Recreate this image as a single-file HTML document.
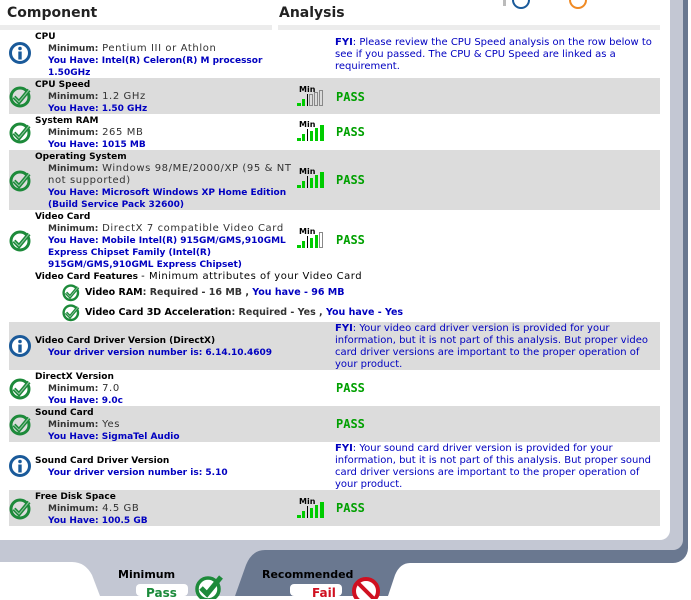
<!DOCTYPE html>
<html><head><meta charset="utf-8"><style>
*{margin:0;padding:0;box-sizing:border-box}
body{width:691px;height:596px;overflow:hidden;background:#fff;font-family:"DejaVu Sans","Liberation Sans",sans-serif;font-size:10px;line-height:12px;color:#333;position:relative}
.a{position:absolute}
.row{position:absolute;left:9px;width:651px}
.g{background:#dcdcdc}
.t{position:absolute;left:26px;color:#000;font-weight:bold;white-space:nowrap;font-size:9px}
.t span{font-size:10px;letter-spacing:.5px}
.m{position:absolute;left:39px;white-space:nowrap;letter-spacing:.6px}
.m b{color:#333;font-size:9px;letter-spacing:0}
.y{color:#0000c0;font-weight:bold;font-size:9px;letter-spacing:0}
.fyi{position:absolute;left:326px;width:325px;color:#0000c0}
.fyi b{font-size:10px}
.pass{position:absolute;left:327px;color:#00a000;font-weight:bold;font-size:12px;font-family:"DejaVu Sans Mono","Liberation Mono",monospace}
.ic{position:absolute;left:0}
.bar{position:absolute;left:288px}
.f{position:absolute;left:76px;color:#000;font-weight:bold;font-size:9.5px;white-space:nowrap}
.f .y{font-size:9.5px}
</style></head><body>
<svg class="a" style="left:0;top:0" width="691" height="596">
<path d="M0 530 H660 A10 10 0 0 0 670 520 V0 H688 V548 A15 15 0 0 1 673 563 H410 Q400 563 395 575 L388 596 H0 Z" fill="#6a7890"/>
<path d="M0 530 H660 A10 10 0 0 0 670 520 V0 H683 V540 A10 10 0 0 1 673 550 H265 Q252 550 246 565 L235 596 H0 Z" fill="#c3c7d3"/>
<path d="M0 562 H72 Q85 562 92 575 L100 596 H0 Z" fill="#fff"/>
<path d="M410 563 H691 V596 H388 Z" fill="#fff"/>
<path d="M0 0 H670 V530 A10 10 0 0 1 660 540 H0 Z" fill="#fff"/>
<rect x="503" y="0" width="3" height="6" fill="#bbb"/>
<path d="M513 0 A8 8 0 0 0 529 0" stroke="#1a5a9a" stroke-width="2" fill="none"/>
<path d="M570 0 A8 8 0 0 0 586 0" stroke="#f08a24" stroke-width="2" fill="none"/>
<rect x="0" y="25" width="272" height="5" fill="#ececec"/>
<rect x="278" y="25" width="382" height="5" fill="#ececec"/>
<rect x="136" y="584" width="52" height="12" rx="4" fill="#fff"/>
<rect x="290" y="584" width="52" height="12" rx="4" fill="#fff"/>
</svg>
<div class="a" style="left:7px;top:5px;font-size:14px;font-weight:bold;color:#222;line-height:16px">Component</div>
<div class="a" style="left:279px;top:5px;font-size:14px;font-weight:bold;color:#222;line-height:16px">Analysis</div>

<svg width="0" height="0" style="position:absolute"><defs>
<g id="chk"><circle cx="11" cy="11" r="9" fill="none" stroke="#1d8a3a" stroke-width="3"/><path d="M5 11 L10 16 L20 4" stroke="#1d8a3a" stroke-width="4" fill="none"/><path d="M5 11 L10 16 L20 4" stroke="#fff" stroke-width="1" fill="none" opacity=".5"/></g>
<g id="inf"><circle cx="11" cy="11" r="9.5" fill="#fff" stroke="#1a5a9a" stroke-width="3"/><circle cx="11" cy="6.5" r="1.8" fill="#1a5a9a"/><rect x="9.3" y="9.5" width="3.4" height="8" fill="#1a5a9a"/></g>
<g id="b6"><text x="2" y="8" font-size="8" font-weight="bold" font-family="DejaVu Sans" fill="#000">Min</text><rect x="0" y="19" width="4" height="3" fill="#0c0"/><rect x="5" y="15" width="3" height="7" fill="#0c0"/><rect x="10" y="10" width="1" height="12" fill="#000"/><rect x="13" y="12" width="3" height="10" fill="#0c0"/><rect x="18" y="9" width="3" height="13" fill="#0c0"/><rect x="23" y="6" width="4" height="16" fill="#0c0"/></g>
</defs></svg>

<div class="row" style="top:30px;height:48px">
<svg class="ic" style="top:12px" width="22" height="22"><use href="#inf"/></svg>
<div class="t" style="top:1px">CPU</div>
<div class="m" style="top:13px"><b>Minimum:</b> Pentium III or Athlon<br><span class="y">You Have: Intel(R) Celeron(R) M processor<br>1.50GHz</span></div>
<div class="fyi" style="top:7px"><b>FYI</b>: Please review the CPU Speed analysis on the row below to see if you passed. The CPU &amp; CPU Speed are linked as a requirement.</div>
</div>
<div class="row g" style="top:78px;height:36px">
<svg class="ic" style="top:8px" width="22" height="22"><use href="#chk"/></svg>
<div class="t" style="top:1px">CPU Speed</div>
<div class="m" style="top:13px"><b>Minimum:</b> 1.2 GHz<br><span class="y">You Have: 1.50 GHz</span></div>
<svg class="bar" style="top:6px" width="30" height="24"><text x="2" y="8" font-size="8" font-weight="bold" font-family="DejaVu Sans">Min</text><rect x="0" y="19" width="4" height="3" fill="#0c0"/><rect x="5" y="15" width="3" height="7" fill="#0c0"/><rect x="10" y="10" width="1" height="12" fill="#000"/><rect x="12.5" y="10.5" width="3" height="11" fill="none" stroke="#888"/><rect x="17.5" y="8.5" width="3" height="13" fill="none" stroke="#888"/><rect x="22.5" y="6.5" width="3" height="15" fill="none" stroke="#888"/></svg>
<div class="pass" style="top:13px">PASS</div>
</div>
<div class="row" style="top:114px;height:36px">
<svg class="ic" style="top:8px" width="22" height="22"><use href="#chk"/></svg>
<div class="t" style="top:1px">System RAM</div>
<div class="m" style="top:13px"><b>Minimum:</b> 265 MB<br><span class="y">You Have: 1015 MB</span></div>
<svg class="bar" style="top:5px" width="30" height="24"><use href="#b6"/></svg>
<div class="pass" style="top:12px">PASS</div>
</div>
<div class="row g" style="top:150px;height:60px">
<svg class="ic" style="top:20px" width="22" height="22"><use href="#chk"/></svg>
<div class="t" style="top:1px">Operating System</div>
<div class="m" style="top:13px"><b>Minimum:</b> Windows 98/ME/2000/XP (95 &amp; NT<br>not supported)<br><span class="y">You Have: Microsoft Windows XP Home Edition<br>(Build Service Pack 32600)</span></div>
<svg class="bar" style="top:16px" width="30" height="24"><use href="#b6"/></svg>
<div class="pass" style="top:24px">PASS</div>
</div>
<div class="row" style="top:210px;height:112px">
<svg class="ic" style="top:20px" width="22" height="22"><use href="#chk"/></svg>
<div class="t" style="top:1px">Video Card</div>
<div class="m" style="top:13px"><b>Minimum:</b> DirectX 7 compatible Video Card<br><span class="y">You Have: Mobile Intel(R) 915GM/GMS,910GML<br>Express Chipset Family (Intel(R)<br>915GM/GMS,910GML Express Chipset)</span></div>
<svg class="bar" style="top:16px" width="30" height="24"><text x="2" y="8" font-size="8" font-weight="bold" font-family="DejaVu Sans">Min</text><rect x="0" y="19" width="4" height="3" fill="#0c0"/><rect x="5" y="15" width="3" height="7" fill="#0c0"/><rect x="10" y="10" width="1" height="12" fill="#000"/><rect x="13" y="12" width="3" height="10" fill="#0c0"/><rect x="18" y="9" width="3" height="13" fill="#0c0"/><rect x="22.5" y="6.5" width="3" height="15" fill="none" stroke="#888"/></svg>
<div class="pass" style="top:24px">PASS</div>
<div class="t" style="top:61px">Video Card Features <span style="font-weight:normal">- Minimum attributes of your Video Card</span></div>
<svg class="a" style="left:53px;top:74px" width="18" height="18"><g transform="scale(.8)"><use href="#chk"/></g></svg>
<div class="f" style="top:77px">Video RAM<span style="color:#333">: Required - 16 MB ,</span> <span class="y">You have - 96 MB</span></div>
<svg class="a" style="left:53px;top:94px" width="18" height="18"><g transform="scale(.8)"><use href="#chk"/></g></svg>
<div class="f" style="top:97px">Video Card 3D Acceleration<span style="color:#333">: Required - Yes ,</span> <span class="y">You have - Yes</span></div>
</div>
<div class="row g" style="top:322px;height:48px">
<svg class="ic" style="top:13px" width="22" height="22"><use href="#inf"/></svg>
<div class="t" style="top:13px">Video Card Driver Version (DirectX)</div>
<div class="m" style="top:25px"><span class="y">Your driver version number is: 6.14.10.4609</span></div>
<div class="fyi" style="top:1px"><b>FYI</b>: Your video card driver version is provided for your information, but it is not part of this analysis. But proper video card driver versions are important to the proper operation of your product.</div>
</div>
<div class="row" style="top:370px;height:36px">
<svg class="ic" style="top:8px" width="22" height="22"><use href="#chk"/></svg>
<div class="t" style="top:1px">DirectX Version</div>
<div class="m" style="top:13px"><b>Minimum:</b> 7.0<br><span class="y">You Have: 9.0c</span></div>
<div class="pass" style="top:12px">PASS</div>
</div>
<div class="row g" style="top:406px;height:36px">
<svg class="ic" style="top:8px" width="22" height="22"><use href="#chk"/></svg>
<div class="t" style="top:1px">Sound Card</div>
<div class="m" style="top:13px"><b>Minimum:</b> Yes<br><span class="y">You Have: SigmaTel Audio</span></div>
<div class="pass" style="top:12px">PASS</div>
</div>
<div class="row" style="top:442px;height:48px">
<svg class="ic" style="top:13px" width="22" height="22"><use href="#inf"/></svg>
<div class="t" style="top:13px">Sound Card Driver Version</div>
<div class="m" style="top:25px"><span class="y">Your driver version number is: 5.10</span></div>
<div class="fyi" style="top:1px"><b>FYI</b>: Your sound card driver version is provided for your information, but it is not part of this analysis. But proper sound card driver versions are important to the proper operation of your product.</div>
</div>
<div class="row g" style="top:490px;height:36px">
<svg class="ic" style="top:8px" width="22" height="22"><use href="#chk"/></svg>
<div class="t" style="top:1px">Free Disk Space</div>
<div class="m" style="top:13px"><b>Minimum:</b> 4.5 GB<br><span class="y">You Have: 100.5 GB</span></div>
<svg class="bar" style="top:6px" width="30" height="24"><use href="#b6"/></svg>
<div class="pass" style="top:12px">PASS</div>
</div>

<div class="a" style="left:118px;top:569px;font-weight:bold;font-size:11px;color:#000">Minimum</div>
<div class="a" style="left:146px;top:587px;font-weight:bold;font-size:12px;color:#1a8a3a">Pass</div>
<svg class="a" style="left:194px;top:575px" width="34" height="24"><circle cx="14" cy="14" r="11" fill="#fff" stroke="#1d8a3a" stroke-width="3.5"/><path d="M7 13 L13 19 L27 2" stroke="#1d8a3a" stroke-width="5" fill="none"/></svg>
<div class="a" style="left:262px;top:569px;font-weight:bold;font-size:11px;color:#000">Recommended</div>
<div class="a" style="left:312px;top:587px;font-weight:bold;font-size:12px;color:#d01020">Fail</div>
<svg class="a" style="left:350px;top:575px" width="32" height="24"><circle cx="16" cy="16" r="12" fill="#fff" stroke="#d01020" stroke-width="4"/><path d="M8 8 L24 24" stroke="#d01020" stroke-width="4"/></svg>
</body></html>
